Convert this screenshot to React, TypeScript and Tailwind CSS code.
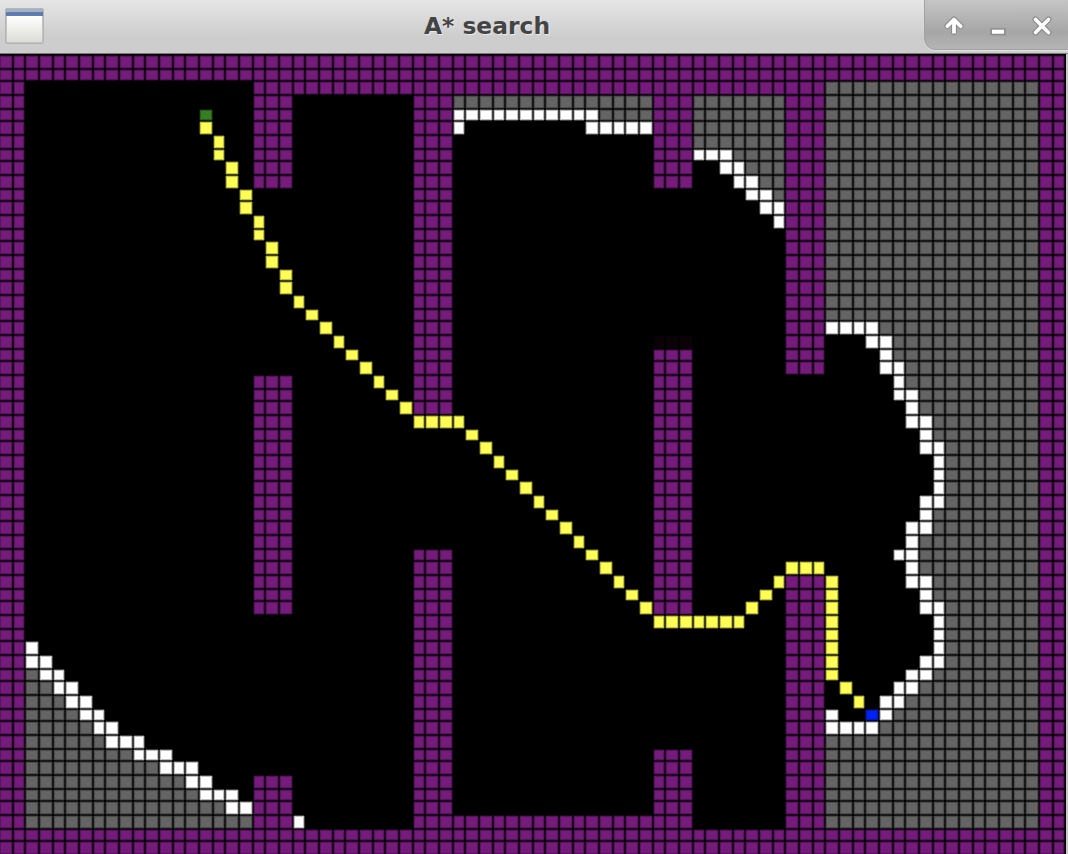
type Kind = 'empty' | 'wall' | 'open' | 'frontier' | 'path' | 'start' | 'goal' | 'faint';

const COLS = 80;
const ROWS = 60;

const cellStyles: Record<Kind, string> = {
  empty: '',
  wall: 'border border-[#57145c] bg-[#741b7b] shadow-[1px_0_#1d071f,-1px_0_#1d071f,0_1px_#1d071f,0_-1px_#1d071f]',
  open: 'border border-[#4b4b4b] bg-[#646464] shadow-[1px_0_#191919,-1px_0_#191919,0_1px_#191919,0_-1px_#191919]',
  frontier: 'border border-[#bfbfbf] bg-white shadow-[1px_0_#404040,-1px_0_#404040,0_1px_#404040,0_-1px_#404040]',
  path: 'border border-[#bfbf3f] bg-[#fffe54] shadow-[1px_0_#404015,-1px_0_#404015,0_1px_#404015,0_-1px_#404015]',
  start: 'border border-[#295e1a] bg-[#377e22] shadow-[1px_0_#0e1f08,-1px_0_#0e1f08,0_1px_#0e1f08,0_-1px_#0e1f08]',
  goal: 'border border-[#0019b9] bg-[#0022f5] shadow-[1px_0_#00083d,-1px_0_#00083d,0_1px_#00083d,0_-1px_#00083d]',
  faint: 'bg-[#0a0206]',
};

const cells: Kind[][] = Array.from({ length: ROWS }, () => Array<Kind>(COLS).fill('empty'));

// Inclusive rectangle: rows r0..r1, columns c0..c1.
function fill(kind: Kind, r0: number, r1: number, c0: number, c1: number) {
  for (let r = r0; r <= r1; r++) for (let c = c0; c <= c1; c++) cells[r][c] = kind;
}

// Unexplored areas.
fill('open', 2, 57, 62, 77);
fill('open', 3, 4, 34, 48);
fill('open', 3, 11, 52, 58);
fill('open', 46, 57, 2, 18);

// Walls.
fill('wall', 0, 1, 0, 79);
fill('wall', 58, 59, 0, 79);
fill('wall', 0, 59, 0, 1);
fill('wall', 0, 59, 78, 79);
fill('wall', 2, 2, 19, 61);
fill('wall', 57, 57, 31, 51);
fill('wall', 2, 9, 19, 21);
fill('wall', 24, 41, 19, 21);
fill('wall', 54, 57, 19, 21);
fill('wall', 2, 26, 31, 33);
fill('wall', 37, 57, 31, 33);
fill('wall', 2, 9, 49, 51);
fill('faint', 21, 21, 49, 51);
fill('wall', 22, 41, 49, 51);
fill('wall', 52, 57, 49, 51);
fill('wall', 2, 23, 59, 61);
fill('wall', 39, 57, 59, 61);

// Frontier runs: [row, first column, last column, first column of the chamber].
const frontierRight: [number, number, number, number][] = [
  [7, 52, 54, 52], [8, 54, 55, 52], [9, 55, 56, 52], [10, 56, 57, 52], [11, 57, 58, 52], [12, 58, 58, 52],
  [20, 62, 65, 62], [21, 65, 66, 62], [22, 66, 66, 62], [23, 66, 67, 62], [24, 67, 67, 62], [25, 67, 68, 62],
  [26, 68, 68, 62], [27, 68, 69, 62], [28, 69, 69, 62], [29, 69, 70, 62], [30, 70, 70, 62], [31, 70, 70, 62],
  [32, 70, 70, 62], [33, 69, 70, 62], [34, 69, 69, 62], [35, 68, 69, 62], [36, 68, 68, 62], [37, 67, 68, 62],
  [38, 68, 68, 62], [39, 68, 69, 62], [40, 69, 69, 62], [41, 69, 70, 62], [42, 70, 70, 62], [43, 70, 70, 62],
  [44, 70, 70, 62], [45, 69, 70, 62], [46, 68, 69, 62], [47, 67, 68, 62], [48, 66, 67, 62], [49, 66, 66, 62],
  [50, 62, 65, 62],
];
frontierRight.forEach(([r, a, b, edge]) => {
  fill('empty', r, r, edge, a - 1);
  fill('frontier', r, r, a, b);
});

const frontierLeft: [number, number, number][] = [
  [44, 2, 2], [45, 2, 3], [46, 3, 4], [47, 4, 5], [48, 5, 6], [49, 6, 7], [50, 7, 8], [51, 8, 10],
  [52, 10, 12], [53, 12, 14], [54, 14, 15], [55, 15, 17], [56, 17, 18],
];
frontierLeft.forEach(([r, a, b]) => {
  fill('empty', r, r, b + 1, 18);
  fill('frontier', r, r, a, b);
});

fill('frontier', 4, 4, 34, 44);
fill('frontier', 5, 5, 34, 34);
fill('frontier', 5, 5, 44, 48);
fill('frontier', 49, 49, 62, 62);
fill('frontier', 57, 57, 22, 22);

// Route found by the search.
fill('start', 4, 4, 15, 15);
fill('path', 5, 5, 15, 15);
for (let i = 0; i < 6; i++) fill('path', 6 + i * 2, 7 + i * 2, 16 + i, 16 + i);
for (let r = 18; r <= 26; r++) fill('path', r, r, r + 4, r + 4);
fill('path', 27, 27, 31, 34);
for (let r = 28; r <= 41; r++) fill('path', r, r, r + 7, r + 7);
fill('path', 42, 42, 49, 55);
for (let r = 39; r <= 41; r++) fill('path', r, r, 97 - r, 97 - r);
fill('path', 38, 38, 59, 61);
fill('path', 39, 46, 62, 62);
fill('path', 47, 47, 63, 63);
fill('path', 48, 48, 64, 64);
fill('goal', 49, 49, 65, 65);

function WindowIcon() {
  return (
    <div className="flex h-[36px] w-[39px] flex-col rounded-[2px] border border-[#b4b4b2] bg-[#c4c4c0]">
      <div className="h-[3px] bg-[#a3b1c4]" />
      <div className="h-[4px] bg-[#5f7cb0]" />
      <div className="mx-px mb-px flex-1 bg-linear-to-b from-white to-[#dcdcd7]" />
    </div>
  );
}

function TitleBar() {
  return (
    <header className="flex h-[54px] shrink-0 border-b border-[#7a7a7a] bg-linear-to-b from-[#e6e6e6] to-[#cdcdcd] to-70%">
      <div className="w-[50px] pt-[8px] pl-[5px]">
        <WindowIcon />
      </div>
      <h1 className="flex-1 pt-[12px] text-center font-['DejaVu_Sans'] text-[23.4px] leading-[28px] font-bold text-[#444444] [text-shadow:1px_1px_1px_#eeeeee]">
        A* search
      </h1>
      <div className="h-[50px] w-[144px] rounded-bl-[12px] border-b border-l border-[#a2a2a2] bg-linear-to-b from-[#c5c5c5] via-[#a6a6a6] via-65% to-[#b4b4b4] shadow-[0_1px_1px_#e4e4e4]">
        <svg width="143" height="49" viewBox="925 0 143 49" fill="none">
          <g stroke="#8c8c8c" strokeLinejoin="round" strokeLinecap="round">
            <path d="M954 32V20M947.5 26l6.500-6.500 6.500 6.500" strokeWidth="6" />
            <path d="M991 29h14v5.500h-14z" strokeWidth="1.500" />
            <path d="M1035.500 19.500l13 13M1048.500 19.500l-13 13" strokeWidth="6" />
          </g>
          <path d="M954 33.500V20" stroke="#fff" strokeWidth="3.800" />
          <path d="M947.300 26.300l6.700-6.800 6.700 6.800" stroke="#fff" strokeWidth="3.600" strokeLinejoin="round" strokeLinecap="round" />
          <path d="M992 31.700h12" stroke="#fff" strokeWidth="4" />
          <path d="M1035.500 19.500l13 13M1048.500 19.500l-13 13" stroke="#fff" strokeWidth="3.600" strokeLinecap="round" />
        </svg>
      </div>
    </header>
  );
}

export default function App() {
  return (
    <div className="flex h-[854px] w-[1068px] flex-col overflow-hidden bg-black">
      <TitleBar />
      <main className="flex min-h-0 flex-1">
        <div className="grid h-[800px] w-[1066px] shrink-0 grid-cols-[repeat(26,12px_10px_12px)_12px_10px] grid-rows-[repeat(20,12px_10px_12px)] gap-[2px] overflow-hidden pt-[2px]">
          {cells.flatMap((row, r) => row.map((kind, c) => <div key={`${r}-${c}`} className={cellStyles[kind]} />))}
        </div>
        <div className="w-[2px] bg-[#c9c9c9]" />
      </main>
    </div>
  );
}
